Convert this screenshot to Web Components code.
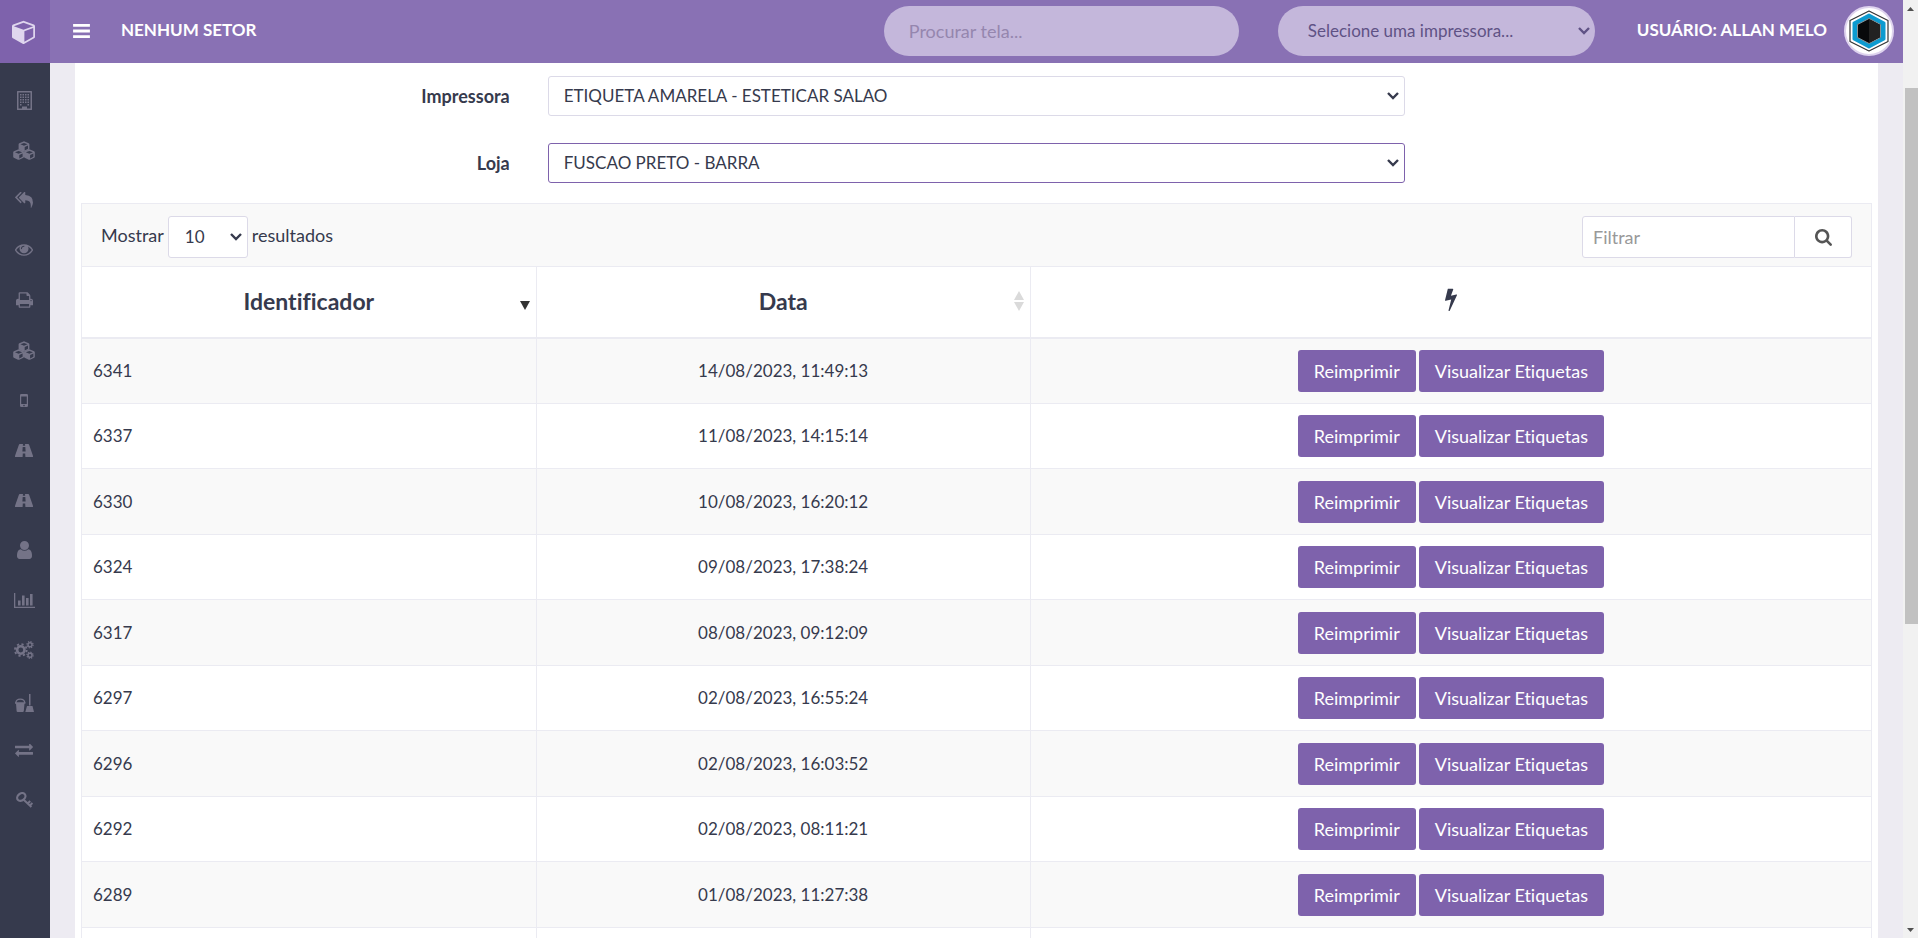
<!DOCTYPE html>
<html lang="pt-BR">
<head>
<meta charset="utf-8">
<meta name="viewport" content="width=device-width, initial-scale=1">
<title>Etiquetas</title>
<style>
  html, body { height: 100%; margin: 0; }
  body {
    --purple: #7e62ac;
    --bar: #8971b4;
    --dark: #363a4d;
    --line: #ebebf2;
    --field: #dcdae8;
    font-family: Lato, "Liberation Sans", sans-serif;
    font-size: 18px;
    line-height: 24px;
    font-variant-ligatures: none;
    color: var(--dark);
    overflow: hidden;
  }
</style>
</head>
<body>
<app-shell>
  <side-nav slot="nav"></side-nav>
  <top-bar slot="top" sector="NENHUM SETOR" user="USUÁRIO: ALLAN MELO"></top-bar>
  <filter-form></filter-form>
  <label-table></label-table>
  <page-scroll slot="scroll"></page-scroll>
</app-shell>

<script>
const P = {
  bars: [1536, 1280, '<path d="M0 0h1536v256H0zM0 512h1536v256H0zM0 1024h1536v256H0z"/>'],
  cube: [1664, 1792, '<path d="M896 1629l640-349v-636l-640 233v752zm-64-865l698-254-698-254-698 254zm832-252v768q0 35-18 65t-49 47l-704 384q-28 16-61 16t-61-16l-704-384q-31-17-49-47t-18-65v-768q0-40 23-73t61-50l704-256q22-8 44-8t44 8l704 256q38 17 61 50t23 73z"/>'],
  building: [15, 19, '<path fill-rule="evenodd" d="M.6 0h13.8q.6 0 .6.6v17.8q0 .6-.6.6H.6q-.6 0-.6-.6V.6Q0 0 .6 0zM1.5 1.5v16H5V15.500h5v2h3.500V1.500z"/><path d="M3 3h1.500v1.500H3zM5.500 3H7v1.500H5.500zM8 3h1.500v1.500H8zM10.500 3H12v1.500h-1.500zM3 5.500h1.500V7H3zM5.500 5.500H7V7H5.500zM8 5.500h1.500V7H8zM10.500 5.500H12V7h-1.500zM3 8h1.500v1.500H3zM5.500 8H7v1.500H5.500zM8 8h1.500v1.500H8zM10.500 8H12v1.500h-1.500zM3 10.500h1.500V12H3zM5.500 10.500H7V12H5.500zM8 10.500h1.500V12H8zM10.500 10.500H12V12h-1.500zM3 13h1.500v1.500H3zM10.500 13H12v1.500h-1.500z"/>'],
  cubes: [22, 19, ['0 0', '-5.4 8', '5.4 8'].map(t => `<path fill-rule="evenodd" transform="translate(${t})" d="M11 .3l4.700 1.900q.7.300.7 1v4.500q0 .7-.6 1l-4.200 2q-.6.300-1.200 0l-4.200-2q-.6-.3-.6-1V3.200q0-.7.700-1zM11 1.900L7.400 3.300 11 4.800l3.600-1.500zM11.700 6v3.400l3.300-1.600V4.600z"/>`).join('')],
  reply: [1792, 1600, '<path transform="translate(0 -100)" d="M640 1082v70q0 42-39 59-13 5-25 5-27 0-45-19l-512-512q-19-19-19-45t19-45l512-512q29-31 70-14 39 17 39 59v69l-397 398q-19 19-19 45t19 45zm1152 58q0 58-17 133.500t-38.500 138-48 125-40.500 90.500l-20 40q-8 17-28 17-6 0-9-1-25-8-23-34 43-400-106-565-64-71-170.500-110.500t-267.500-52.500v251q0 42-39 59-13 5-25 5-27 0-45-19l-512-512q-19-19-19-45t19-45l512-512q29-31 70-14 39 17 39 59v262q411 28 599 221 169 173 169 509z"/>'],
  eye: [1792, 1152, '<path transform="translate(0 -384)" d="M1664 960q-152-236-381-353 61 104 61 225 0 185-131.500 316.500t-316.500 131.500-316.500-131.500-131.500-316.500q0-121 61-225-229 117-381 353 133 205 333.500 326.500t434.500 121.500 434.500-121.500 333.500-326.500zm-720-384q0-20-14-34t-34-14q-125 0-214.500 89.500t-89.500 214.500q0 20 14 34t34 14 34-14 14-34q0-86 61-147t147-61q20 0 34-14t14-34zm848 384q0 34-20 69-140 230-376.500 368.500t-499.500 138.500-499.500-139-376.500-368q-20-35-20-69t20-69q140-229 376.500-368t499.500-139 499.500 139 376.500 368q20 35 20 69z"/>'],
  print: [1664, 1536, '<path transform="translate(-64 -128)" d="M448 1536h896v-256h-896v256zm0-640h896v-384h-160q-40 0-68-28t-28-68v-160h-640v640zm1152 64q0-26-19-45t-45-19-45 19-19 45 19 45 45 19 45-19 19-45zm128 0v416q0 13-9.500 22.500t-22.500 9.500h-224v160q0 40-28 68t-68 28h-960q-40 0-68-28t-28-68v-160h-224q-13 0-22.500-9.500t-9.500-22.500v-416q0-79 56.500-135.500t135.500-56.500h64v-544q0-40 28-68t68-28h672q40 0 88 20t76 48l152 152q28 28 48 76t20 88v256h64q79 0 135.500 56.500t56.500 135.500z"/>'],
  mobile: [8, 13, '<path fill-rule="evenodd" d="M1.300 0h5.400Q8 0 8 1.300v10.400Q8 13 6.700 13H1.300Q0 13 0 11.700V1.300Q0 0 1.300 0zM1.200 2.400v7.700h5.600V2.400zM4 10.800a.8.800 0 100 1.600.8.800 0 000-1.600z"/>'],
  road: [18, 13, '<path fill-rule="evenodd" d="M4.700 0H8L7.800 1.700h2.400L10 0h3.300q.5 0 .8.700l3.700 10.600q.6 1.700-.3 1.700h-7.100L10.200 9.400H7.800L7.600 13H.5q-.9 0-.3-1.700L3.900.7Q4.200 0 4.700 0zM7.700 3L7.400 7.500h3.200L10.300 3z"/>'],
  user: [1280, 1536, '<path transform="translate(-256 -128)" d="M1536 1399q0 109-62.500 187t-150.500 78h-854q-88 0-150.500-78t-62.500-187q0-85 8.500-160.500t31.500-152 58.500-131 94-89 134.500-34.500q131 128 313 128t313-128q76 0 134.500 34.500t94 89 58.500 131 31.500 152 8.500 160.500zm-256-887q0 159-112.500 271.500t-271.500 112.500-271.500-112.500-112.500-271.500 112.500-271.500 271.500-112.500 271.500 112.500 112.500 271.500z"/>'],
  chart: [21, 15, '<path d="M0 0h1.300v13.700H21V15H0zM4 7.500h2.600v5H4zM8 2.500h2.600v10H8zM12 5h2.600v7.500H12zM16 1h2.600v11.500H16z"/>'],
  cogs: [20, 18, '<g fill="none" stroke="currentColor"><circle cx="6.800" cy="9" r="3.700" stroke-width="2.600"/><circle cx="6.800" cy="9" r="5.900" stroke-width="1.800" stroke-dasharray="2.200 2.430"/><circle cx="16" cy="3.700" r="2" stroke-width="1.400"/><circle cx="16" cy="3.700" r="3.100" stroke-width="1.200" stroke-dasharray="1.300 1.134"/><circle cx="16" cy="14.300" r="2" stroke-width="1.400"/><circle cx="16" cy="14.300" r="3.100" stroke-width="1.200" stroke-dasharray="1.300 1.134"/></g>'],
  bucket: [19, 24, '<g transform="translate(0 6)"><path d="M1 9.500h8.500L8.800 17q-.1 1-1 1H2.600q-.9 0-1-1zM0 8.300h10.400v1.400H0zM14 0h1.500v11.500H14zM12 12h5.500l1.500 6h-8.700z"/><path fill="none" stroke="currentColor" stroke-width="1.200" d="M.8 9C1 3.700 9.600 3.700 9.800 9"/></g>'],
  exchange: [1792, 1280, '<path transform="translate(0 -352)" d="M1792 1184v192q0 13-9.500 22.500t-22.500 9.500h-1376v192q0 13-9.500 22.500t-22.500 9.500q-12 0-24-10l-319-320q-9-9-9-22 0-14 9-23l320-320q9-9 23-9 13 0 22.500 9.500t9.500 22.500v192h1376q13 0 22.500 9.500t9.500 22.500zm0-544q0 14-9 23l-320 320q-9 9-23 9-13 0-22.500-9.500t-9.500-22.500v-192h-1376q-13 0-22.500-9.500t-9.500-22.500v-192q0-13 9.500-22.500t22.500-9.500h1376v-192q0-14 9-23t23-9q12 0 24 10l319 319q9 9 9 23z"/>'],
  key: [17, 16, '<g fill="none" stroke="currentColor"><ellipse cx="5.300" cy="5" rx="4.500" ry="3.500" transform="rotate(-40 5.300 5)" stroke-width="2.200"/><path stroke-width="2" d="M7.700 7.800l7.700 7.200M11.800 11.500l2.400-2.500M14 13.500l2.400-2.500"/></g>'],
  search: [1664, 1664, '<path transform="translate(-64 -128)" d="M1216 832q0-185-131.500-316.500t-316.500-131.500-316.500 131.500-131.500 316.500 131.500 316.500 316.500 131.500 316.500-131.500 131.500-316.500zm512 832q0 52-38 90t-90 38q-54 0-90-38l-343-342q-179 124-399 124-143 0-273.500-55.500t-225-150-150-225-55.500-273.500 55.500-273.500 150-225 225-150 273.500-55.500 273.500 55.500 225 150 150 225 55.500 273.500q0 220-124 399l343 343q37 37 37 90z"/>'],
  bolt: [896, 1792, '<path transform="translate(-448 0)" d="M1333 566q18 20 7 44l-540 1157q-13 25-42 25-4 0-14-2-17-5-25.500-19t-4.500-30l197-808-406 101q-4 1-12 1-18 0-31-11-18-15-13-39l201-825q4-14 16-23t28-9h328q19 0 32 12.500t13 29.500q0 8-5 18l-171 463 396-98q8-2 12-2 19 0 34 15z"/>'],
  down: [10, 9, '<path d="M0 0h10L5 9z"/>'],
  both: [10, 20, '<path d="M5 0l5 9H0zM0 11h10l-5 9z"/>'],
  logo: [50, 50, '<circle cx="25" cy="25" r="24" fill="#fff" stroke="#ded3ee" stroke-width="2"/><path fill="#fff" stroke="#333" stroke-width="1.200" stroke-linejoin="round" d="M25 5l19 9.500v21L25 45 6 35.500v-21z"/><path fill="#0d9bd0" stroke="#0d9bd0" stroke-width="3" stroke-linejoin="round" d="M25 9l15 8v16l-15 8-15-8V17z"/><path fill="#08090b" stroke="#8a9196" stroke-width="1" d="M25 12.500l11.500 6v13L25 37.500l-11.500-6v-13z"/><path fill="#222" d="M25 13l11 6v12l-11 6z"/>']
};

const define = (name, render) => customElements.define(name, class extends HTMLElement {
  connectedCallback() {
    if (this.shadowRoot) return;
    this.attachShadow({ mode: 'open' }).innerHTML = render(this);
  }
});

const chevron = c => `url("data:image/svg+xml,%3Csvg xmlns='http://www.w3.org/2000/svg' width='12' height='8'%3E%3Cpath d='M1 1l5 5 5-5' fill='none' stroke='%23${c}' stroke-width='2.400'/%3E%3C/svg%3E") no-repeat right 5px center`;

define('ui-icon', el => {
  const [w, h, body] = P[el.getAttribute('name')];
  const width = el.getAttribute('width');
  return `<style>:host{display:inline-flex;align-items:center;justify-content:center}svg{display:block;fill:currentColor}</style>
  <svg width="${width}" height="${Math.round(width * h / w)}" viewBox="0 0 ${w} ${h}" aria-hidden="true">${body}</svg>`;
});

define('app-shell', () => `<style>
  :host{display:grid;grid-template-columns:50px minmax(0,1fr) 15px;grid-template-rows:63px minmax(0,1fr);height:100vh;background:#edebf2}
  .nav{grid-row:1/3;display:grid}
  .scroll{grid-row:1/3;grid-column:3;display:grid}
  main{overflow:hidden;padding:0 25px}
  .card{background:#fff;padding:0 6px;min-height:100%}
  </style>
  <div class="nav"><slot name="nav"></slot></div>
  <slot name="top"></slot>
  <div class="scroll"><slot name="scroll"></slot></div>
  <main><div class="card"><slot></slot></div></main>`);

const menu = [['building', 15, 'Empresas'], ['cubes', 22, 'Produtos'], ['reply', 18, 'Devoluções'], ['eye', 18, 'Consultas'], ['print', 17, 'Impressão'], ['cubes', 22, 'Estoque'], ['mobile', 8, 'Coletor'], ['road', 18, 'Rotas'], ['road', 18, 'Entregas'], ['user', 15, 'Usuários'], ['chart', 21, 'Relatórios'], ['cogs', 20, 'Configurações'], ['bucket', 19, 'Limpeza'], ['exchange', 18, 'Transferências'], ['key', 17, 'Acessos']];

define('side-nav', () => `<style>
  :host{display:block;background:var(--dark);color:#747387}
  a{display:flex;align-items:center;justify-content:center;height:50px;padding-right:2px;color:inherit}
  .home{height:63px;padding-right:3px;box-sizing:border-box;background:var(--purple);color:#dfd6ee;margin-bottom:12px}
  </style>
  <nav><a class="home" href="#" aria-label="Início"><ui-icon name="cube" width="23"></ui-icon></a>
  ${menu.map(([n, w, t]) => `<a href="#" aria-label="${t}"><ui-icon name="${n}" width="${w}"></ui-icon></a>`).join('')}</nav>`);

define('top-bar', el => `<style>
  :host{display:flex;align-items:center;background:var(--bar);color:#fff;padding:0 9px 1px 23px;font-size:17px;font-weight:700}
  button{border:0;background:none;color:inherit;padding:0;margin-right:31px;display:flex}
  .sector{flex:1}
  .sector,.user{padding-bottom:2px}
  input,select{box-sizing:border-box;height:50px;border:0;border-radius:25px;background:#c4b7db;font:inherit;font-weight:400;outline:0;appearance:none}
  input{width:355px;padding:0 25px;margin-right:39px;font-size:18px}
  input::placeholder{color:#9586ae;opacity:1}
  select{width:317px;padding:0 30px;color:#5f5285;margin-right:42px;background:${chevron('5f5285')} #c4b7db}
  .user{margin-right:17px}
  </style>
  <button aria-label="Menu"><ui-icon name="bars" width="17"></ui-icon></button>
  <span class="sector">${el.getAttribute('sector')}</span>
  <input type="search" placeholder="Procurar tela..." aria-label="Procurar tela">
  <select aria-label="Impressora padrão"><option>Selecione uma impressora...</option></select>
  <span class="user">${el.getAttribute('user')}</span>
  <ui-icon name="logo" width="50"></ui-icon>`);

define('filter-form', () => `<style>
  :host{display:block;padding:13px 0 20px}
  form{display:grid;grid-template-columns:1fr 2fr 1fr;row-gap:27px;align-items:center}
  label{grid-column:1;text-align:right;padding-right:19px;font-weight:700}
  select{grid-column:2;margin:0 19px;height:40px;box-sizing:border-box;border:1px solid var(--field);border-radius:3px;padding:0 15px;font:inherit;font-size:17px;color:inherit;outline:0;appearance:none;background:${chevron('363a4d')} #fff}
  .on{border-color:var(--purple)}
  </style>
  <form>
    <label for="p">Impressora</label><select id="p"><option>ETIQUETA AMARELA - ESTETICAR SALAO</option></select>
    <label for="l">Loja</label><select id="l" class="on"><option>FUSCAO PRETO - BARRA</option></select>
  </form>`);

const rows = [['6341', '14/08/2023, 11:49:13'], ['6337', '11/08/2023, 14:15:14'], ['6330', '10/08/2023, 16:20:12'], ['6324', '09/08/2023, 17:38:24'], ['6317', '08/08/2023, 09:12:09'], ['6297', '02/08/2023, 16:55:24'], ['6296', '02/08/2023, 16:03:52'], ['6292', '02/08/2023, 08:11:21'], ['6289', '01/08/2023, 11:27:38']];

define('label-table', () => `<style>
  :host{display:block}
  .tools{display:flex;justify-content:space-between;align-items:flex-start;height:62px;box-sizing:content-box;border:1px solid var(--line);border-bottom:0;background:#f9f9f9;padding:0 19px}
  .show,form{padding-top:12px}
  .show{display:flex;gap:4px;line-height:38px}
  select,input,.go{box-sizing:border-box;height:42px;border:1px solid var(--field);background:#fff;font:inherit;color:inherit;outline:0;border-radius:3px}
  select{width:80px;padding:0 16px;font-size:17px;appearance:none;background:${chevron('363a4d')} #fff}
  form{display:flex}
  input{width:213px;padding:0 10px;border-radius:3px 0 0 3px}
  input::placeholder{color:#999;opacity:1}
  .go{width:57px;border-left:0;border-radius:0 3px 3px 0;color:#555;padding:0;display:grid;place-items:center}
  table{width:100%;border-collapse:collapse;table-layout:fixed}
  th,td{border:1px solid var(--line);padding:0 11px;box-sizing:border-box}
  th{height:71px;padding:0 6px 2px;font-size:23px;font-weight:700;border-bottom-width:2px}
  .a{width:25.400%}
  .b{width:27.600%}
  .head{display:grid;grid-template-columns:10px 1fr 10px;align-items:center}
  .head span{grid-column:2}
  .down{color:#333;padding-top:10px}
  .both{color:#dadada}
  td{height:66px;text-align:center;font-size:17px}
  tr:nth-child(even) td{height:65px}
  td:first-child{text-align:left}
  tbody tr:nth-child(odd){background:#f9f9f9}
  .acts{display:flex;justify-content:center;gap:3px;font-size:18px}
  .acts button{height:42px;border:0;border-radius:3px;background:var(--purple);color:#fff;font:inherit;padding:0 16px}
  </style>
  <div class="tools">
    <div class="show"><label for="n">Mostrar</label><select id="n"><option>10</option></select><span>resultados</span></div>
    <form><input placeholder="Filtrar" aria-label="Filtrar"><button class="go" type="button" aria-label="Buscar"><ui-icon name="search" width="17"></ui-icon></button></form>
  </div>
  <table>
    <thead><tr>
      <th class="a"><div class="head"><span>Identificador</span><ui-icon class="down" name="down" width="10"></ui-icon></div></th>
      <th class="b"><div class="head"><span>Data</span><ui-icon class="both" name="both" width="10"></ui-icon></div></th>
      <th aria-label="Ações"><ui-icon name="bolt" width="12"></ui-icon></th>
    </tr></thead>
    <tbody>${rows.map(([id, date]) => `<tr><td>${id}</td><td>${date}</td><td><div class="acts"><button>Reimprimir</button><button>Visualizar Etiquetas</button></div></td></tr>`).join('')}
    <tr><td></td><td></td><td></td></tr></tbody>
  </table>`);

define('page-scroll', () => `<style>
  :host{display:flex;flex-direction:column;background:#f1f1f1;color:#505050}
  .before{flex:71}.thumb{flex:536;background:#c1c1c1;margin-left:2px}.after{flex:297}
  svg{display:block;margin:auto;fill:currentColor}
  .end{height:17px;display:grid}
  </style>
  <div class="end"><svg width="7" height="4"><path d="M0 4h7L3.500 0z"/></svg></div>
  <div class="before"></div><div class="thumb"></div><div class="after"></div>
  <div class="end"><svg width="7" height="4"><path d="M0 0h7L3.500 4z"/></svg></div>`);
</script>
</body>
</html>
